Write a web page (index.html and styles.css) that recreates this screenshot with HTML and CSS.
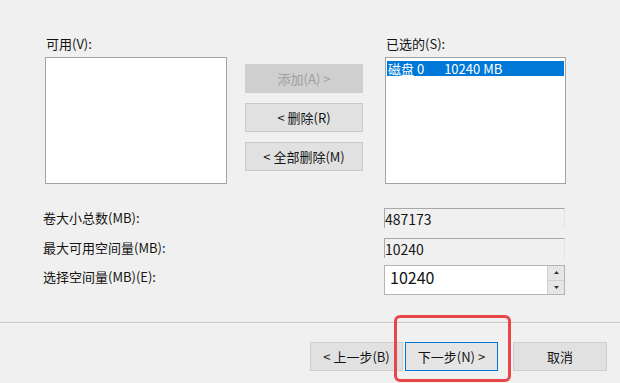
FILE: index.html
```html
<!DOCTYPE html>
<html lang="zh-CN">
<head>
<meta charset="utf-8">
<title>选择磁盘</title>
<link rel="stylesheet" href="styles.css">
</head>
<body>
<div class="page">
  <div class="lists">
    <div class="col col-left">
      <div class="label">可用(V):</div>
      <div class="listbox"></div>
    </div>
    <div class="col col-mid">
      <button class="btn btn-disabled">添加(A) &gt;</button>
      <button class="btn">&lt; 删除(R)</button>
      <button class="btn">&lt; 全部删除(M)</button>
    </div>
    <div class="col col-right">
      <div class="label">已选的(S):</div>
      <div class="listbox">
        <div class="item-selected"><span class="disk">磁盘 0</span><span class="size">10240 MB</span></div>
      </div>
    </div>
  </div>

  <div class="form">
    <div class="row">
      <div class="row-label">卷大小总数(MB):</div>
      <div class="field field-ro">487173</div>
    </div>
    <div class="row">
      <div class="row-label">最大可用空间量(MB):</div>
      <div class="field field-ro">10240</div>
    </div>
    <div class="row row-spin">
      <div class="row-label">选择空间量(MB)(E):</div>
      <div class="field field-spin">
        <span class="spin-value">10240</span>
        <span class="spinner">
          <span class="spin-btn"><svg width="5" height="3" viewBox="0 0 5 3"><path d="M2.5 0 L5 3 L0 3 Z" fill="#333"/></svg></span>
          <span class="spin-btn"><svg width="5" height="3" viewBox="0 0 5 3"><path d="M0 0 L5 0 L2.5 3 Z" fill="#333"/></svg></span>
        </span>
      </div>
    </div>
  </div>

  <div class="separator"></div>

  <div class="footer">
    <button class="btn fbtn fbtn-back">&lt; 上一步(B)</button>
    <button class="btn fbtn fbtn-next">下一步(N) &gt;</button>
    <button class="btn fbtn fbtn-cancel">取消</button>
    <div class="highlight"></div>
  </div>
</div>
</body>
</html>
```

FILE: styles.css
```css
html, body {
  margin: 0;
  padding: 0;
  background: #f0f0f0;
}

body {
  width: 620px;
  height: 383px;
  overflow: hidden;
  font-family: "Noto Sans CJK SC", "Noto Sans", sans-serif;
  font-size: 13px;
  line-height: 16px;
  color: #141414;
}

.page {
  position: relative;
  padding-top: 36px;
}

.lists {
  display: flex;
  padding-left: 45px;
}

.col {
  display: flex;
  flex-direction: column;
}

.col-left {
  width: 182px;
}

.col-mid {
  width: 118px;
  margin-left: 18px;
  margin-right: 22px;
  padding-top: 28px;
  gap: 10px;
}

.col-right {
  width: 181px;
}

.label {
  height: 16px;
  margin-bottom: 5px;
  padding-left: 1px;
}

.listbox {
  background: #ffffff;
  border: 1px solid #a3a3a3;
  padding: 3px 1px 0 1px;
  box-sizing: content-box;
  height: 122px;
}

.item-selected {
  height: 15px;
  font-size: 13px;
  line-height: 15px;
  background: #0078d7;
  color: #ffffff;
  padding-left: 1px;
  white-space: nowrap;
}

.item-selected .size {
  margin-left: 20px;
}

.btn {
  font-family: inherit;
  font-size: 13px;
  line-height: 16px;
  color: #141414;
  background: #e1e1e1;
  border: 1px solid #c9c9c9;
  height: 29px;
  padding: 0;
  margin: 0;
  box-sizing: border-box;
}

.btn-disabled {
  background: #cfcfcf;
  border-color: #cfcfcf;
  color: #a0a0a0;
}

.form {
  margin-top: 24px;
  display: flex;
  flex-direction: column;
}

.row {
  display: flex;
  align-items: center;
  padding-left: 43px;
  margin-bottom: 10px;
}

.row-spin {
  align-items: flex-start;
  margin-top: -3px;
  margin-bottom: 0;
}

.row-spin .row-label {
  padding-top: 4px;
}

.row-label {
  width: 341px;
}

.field {
  width: 181px;
  box-sizing: border-box;
  white-space: nowrap;
}

.field-ro {
  height: 20px;
  font-size: 14px;
  line-height: 20px;
  background: #f0f0f0;
  border-top: 1px solid #a8a8a8;
  border-left: 1px solid #a8a8a8;
  border-right: 1px solid #e3e3e3;
  padding-left: 0;
}

.field-spin {
  height: 30px;
  background: #ffffff;
  border: 1px solid #b4b4b4;
  display: flex;
  align-items: stretch;
}

.spin-value {
  flex: 1;
  font-size: 16px;
  line-height: 22px;
  padding-left: 5px;
}

.spinner {
  width: 16px;
  display: flex;
  flex-direction: column;
  border-left: 1px solid #d0d0d0;
  background: #f0f0f0;
}

.spin-btn {
  flex: 1;
  display: flex;
  align-items: center;
  justify-content: center;
  background: #e6e6e6;
}

.spin-btn + .spin-btn {
  border-top: 1px solid #d0d0d0;
}

.separator {
  margin-top: 27px;
  height: 0;
  border-top: 1px solid #c6c6c6;
  border-bottom: 1px solid #f8f8f8;
}

.footer {
  position: relative;
  display: flex;
  padding-left: 310px;
  padding-top: 18px;
}

.fbtn {
  width: 93px;
  height: 29px;
  border-color: #cfcfcf;
}

.fbtn-next {
  margin-left: 2px;
  border-color: #0078d7;
  background: #e5e5e5;
}

.fbtn-cancel {
  margin-left: 15px;
  width: 94px;
}

.highlight {
  position: absolute;
  left: 394px;
  top: -9px;
  width: 117px;
  height: 67px;
  box-sizing: border-box;
  border: 3px solid #e8474a;
  border-radius: 6px;
}
```
